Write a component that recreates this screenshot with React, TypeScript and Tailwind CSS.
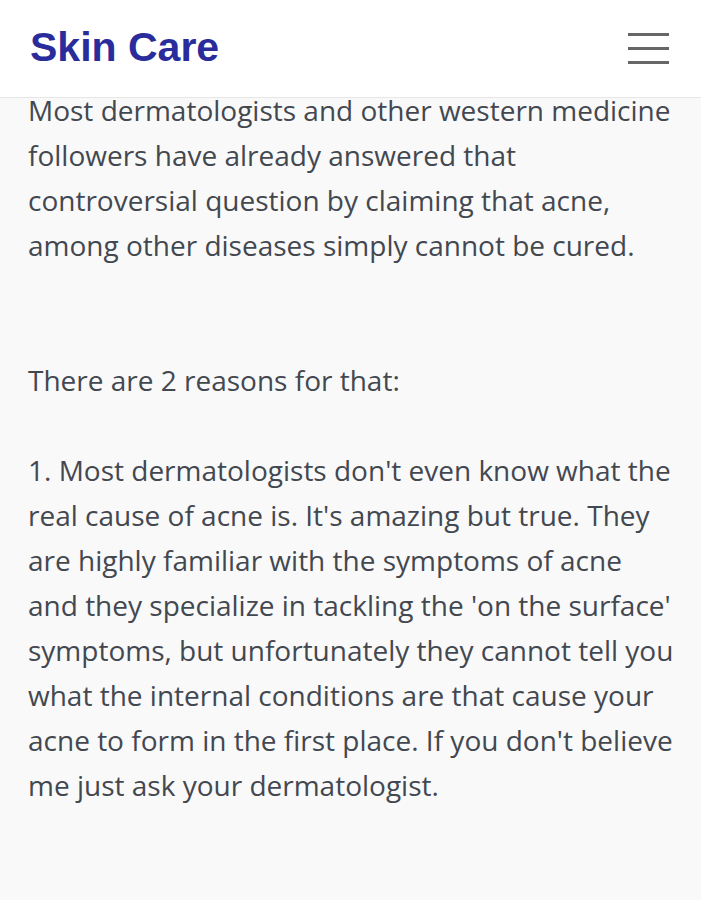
import React from "react";

export default function App() {
  return (
    <div className="min-h-[900px] w-full bg-[#f9f9f9]">
      <header className="h-[98px] bg-white border-b border-[#e6e6e6] flex items-center justify-between pl-[30px] pr-[32px]">
        <h1 className="text-[41px] font-bold text-[#2a2c9c] font-['Liberation_Sans',Arial,sans-serif] leading-none -mt-[3px]">
          Skin Care
        </h1>
        <div className="flex flex-col gap-[11px] w-[41px]">
          <span className="block h-[3px] bg-[#666]" />
          <span className="block h-[3px] bg-[#666]" />
          <span className="block h-[3px] bg-[#666]" />
        </div>
      </header>
      <main className="pl-[28px] pr-[25px] font-['Open_Sans',sans-serif] text-[28px] leading-[45px] text-[#434850]">
        <p className="-mt-[10px]">
          Most dermatologists and other western medicine followers have already answered that controversial question by claiming that acne, among other diseases simply cannot be cured.
          <br />
          <br />
          <br />
          There are 2 reasons for that:
          <br />
          <br />
          1. Most dermatologists don't even know what the real cause of acne is. It's amazing but true. They are highly familiar with the symptoms of acne and they specialize in tackling the 'on the surface' symptoms, but unfortunately they cannot tell you what the internal conditions are that cause your acne to form in the first place. If you don't believe me just ask your dermatologist.
        </p>
      </main>
    </div>
  );
}
